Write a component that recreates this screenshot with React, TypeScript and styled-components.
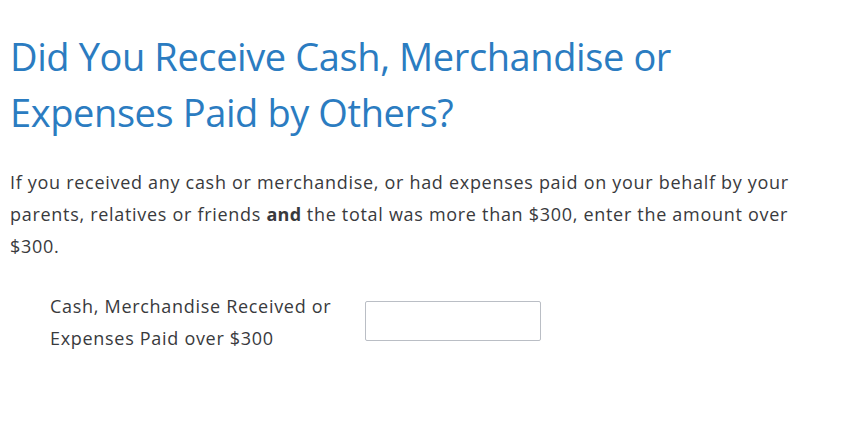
import React from "react";
import styled, { createGlobalStyle } from "styled-components";

const Global = createGlobalStyle`
  html, body { margin: 0; padding: 0; background: #fff; }
  body { font-family: "Open Sans", sans-serif; }
`;

const Page = styled.main`
  padding: 28px 0 0 10px;
  width: 820px;
`;

const Title = styled.h1`
  margin: 0;
  font-family: "Open Sans", sans-serif;
  font-weight: 400;
  font-size: 38px;
  letter-spacing: -0.4px;
  line-height: 56px;
  color: #2b7cc1;
  width: 700px;
`;

const Body = styled.p`
  margin: 26px 0 0;
  font-size: 18px;
  letter-spacing: 0.7px;
  line-height: 32px;
  color: #393a3d;
  width: 805px;

  b {
    font-weight: 700;
    letter-spacing: 0.3px;
  }
`;

const Row = styled.div`
  display: flex;
  align-items: flex-start;
  margin: 28px 0 0 40px;
  gap: 15px;
`;

const Label = styled.label`
  width: 300px;
  font-size: 18px;
  letter-spacing: 0.7px;
  line-height: 32px;
  color: #393a3d;
`;

const Input = styled.input`
  box-sizing: border-box;
  width: 176px;
  height: 40px;
  margin-top: 11px;
  border: 1px solid #babec5;
  border-radius: 2px;
  background: #fff;
`;

export default function App() {
  return (
    <>
      <Global />
      <Page>
        <Title>Did You Receive Cash, Merchandise or Expenses Paid by Others?</Title>
        <Body>
          If you received any cash or merchandise, or had expenses paid on your behalf by your parents, relatives or
          friends <b>and</b> the total was more than $300, enter the amount over $300.
        </Body>
        <Row>
          <Label htmlFor="amt">Cash, Merchandise Received or Expenses Paid over $300</Label>
          <Input id="amt" type="text" />
        </Row>
      </Page>
    </>
  );
}
